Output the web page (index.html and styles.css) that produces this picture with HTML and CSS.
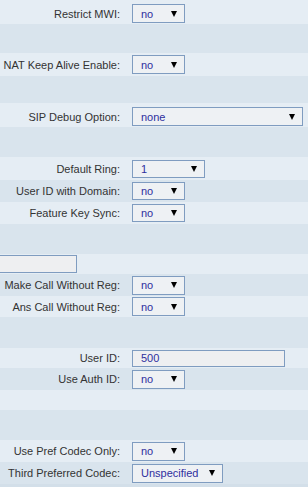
FILE: index.html
```html
<!DOCTYPE html>
<html lang="en">

<head>
    <meta charset="UTF-8">
    <meta name="viewport" content="width=device-width, initial-scale=1.0">
    <title>Ext 1</title>
    <link rel="stylesheet" href="styles.css">
</head>

<body>

    <div class="form">
        <div class="row light h24 low">
            <label class="lbl">Restrict MWI:</label>
            <span class="sel w-no"><select><option>no</option></select></span>
        </div>
        <div class="row dark h29"></div>
        <div class="row light h23">
            <label class="lbl">NAT Keep Alive Enable:</label>
            <span class="sel w-no"><select><option>no</option></select></span>
        </div>
        <div class="row dark h27"></div>
        <div class="row light h24 low">
            <label class="lbl">SIP Debug Option:</label>
            <span class="sel w-debug"><select><option>none</option></select></span>
        </div>
        <div class="row dark h30"></div>
        <div class="row light h23">
            <label class="lbl">Default Ring:</label>
            <span class="sel w-ring sm"><select><option>1</option></select></span>
        </div>
        <div class="row dark h22">
            <label class="lbl">User ID with Domain:</label>
            <span class="sel w-no sm"><select><option>no</option></select></span>
        </div>
        <div class="row light h22">
            <label class="lbl">Feature Key Sync:</label>
            <span class="sel w-no sm"><select><option>no</option></select></span>
        </div>
        <div class="row dark h30"></div>
        <div class="row light h20">
            <div class="lbl stub"><input type="text" class="txt w-stub"></div>
        </div>
        <div class="row dark h22">
            <label class="lbl">Make Call Without Reg:</label>
            <span class="sel w-no"><select><option>no</option></select></span>
        </div>
        <div class="row light h21">
            <label class="lbl">Ans Call Without Reg:</label>
            <span class="sel w-no"><select><option>no</option></select></span>
        </div>
        <div class="row dark h31"></div>
        <div class="row light h20">
            <label class="lbl">User ID:</label>
            <input type="text" class="txt w-uid" value="500">
        </div>
        <div class="row dark h22">
            <label class="lbl">Use Auth ID:</label>
            <span class="sel w-no"><select><option>no</option></select></span>
        </div>
        <div class="row light h20"></div>
        <div class="row dark h30"></div>
        <div class="row light h22">
            <label class="lbl">Use Pref Codec Only:</label>
            <span class="sel w-no"><select><option>no</option></select></span>
        </div>
        <div class="row dark h22">
            <label class="lbl">Third Preferred Codec:</label>
            <span class="sel w-codec"><select><option>Unspecified</option></select></span>
        </div>
        <div class="row deep h10"></div>
    </div>

</body>

</html>
```

FILE: styles.css
```css
* {
    margin: 0;
    padding: 0;
    box-sizing: border-box;
    font-family: "Liberation Sans", Arial, sans-serif;
}

body {
    background-color: #d9e4ed;
    font-size: 11px;
    color: #333;
}

.form {
    display: flex;
    flex-direction: column;
}

.row {
    display: flex;
    align-items: center;
    gap: 12px;
}

.row.low {
    padding-top: 3px;
}

.light {
    background-color: #e5edf4;
}

.dark {
    background-color: #d9e4ed;
}

.deep {
    background-color: #d3dfe9;
}

.h10 { height: 10px; }
.h20 { height: 20px; }
.h21 { height: 21px; }
.h22 { height: 22px; }
.h23 { height: 23px; }
.h24 { height: 24px; }
.h27 { height: 27px; }
.h29 { height: 29px; }
.h30 { height: 30px; }
.h31 { height: 31px; }

.lbl {
    width: 120px;
    text-align: right;
    white-space: nowrap;
    color: #333;
}

.stub {
    text-align: left;
    display: flex;
}

/* select box with the black arrow */
.sel {
    position: relative;
    display: block;
    height: 19px;
}

.sel.sm {
    height: 18px;
}

.sel select {
    appearance: none;
    -webkit-appearance: none;
    width: 100%;
    height: 100%;
    border: 1px solid #7f9cc0;
    background-color: #eef1f4;
    color: #2f2f9e;
    font-size: 11px;
    padding-left: 8px;
    border-radius: 0;
    outline: none;
}

.sel::after {
    content: "";
    position: absolute;
    right: 8px;
    top: 50%;
    margin-top: -3px;
    border-left: 3px solid transparent;
    border-right: 3px solid transparent;
    border-top: 6px solid #000;
    pointer-events: none;
}

.txt {
    height: 18px;
    border: 1px solid #7f9cc0;
    background-color: #eeeff1;
    color: #2f2f9e;
    font-size: 11px;
    padding-left: 8px;
    outline: none;
}

.w-no { width: 53px; }
.w-debug { width: 171px; }
.w-ring { width: 73px; }
.w-codec { width: 91px; }
.w-uid { width: 153px; height: 17px; }
.w-stub { width: 77px; border-left: none; }
```
